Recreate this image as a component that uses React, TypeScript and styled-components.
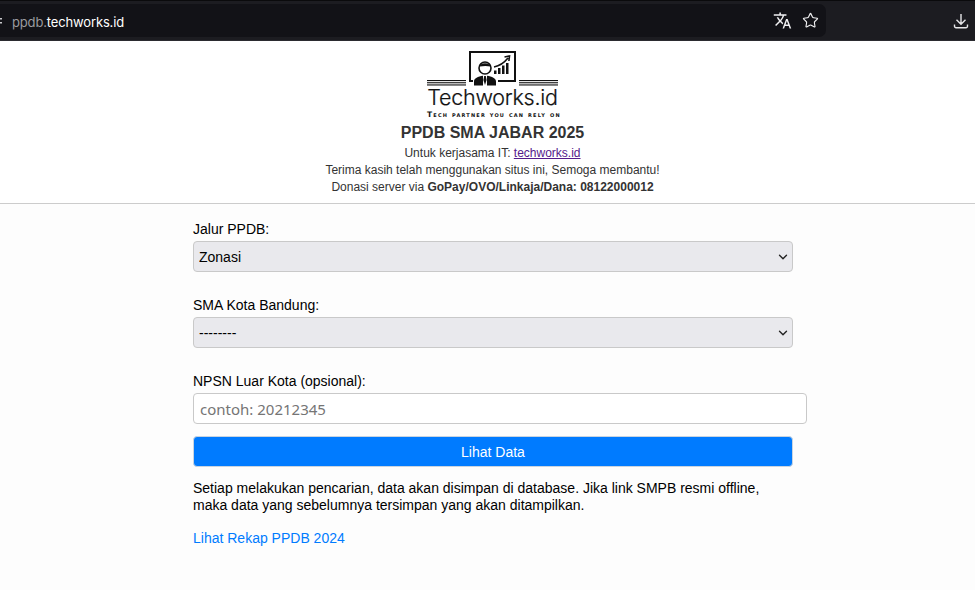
import styled, { createGlobalStyle } from "styled-components";
import { MdTranslate } from "react-icons/md";
import { ChevronDown, Star } from "lucide-react";

const GlobalStyle = createGlobalStyle`
  html, body {
    margin: 0;
    padding: 0;
    background-color: #fdfdfd;
    font-family: "Liberation Sans", Arial, sans-serif;
    color: #000;
  }
  * {
    box-sizing: border-box;
  }
`;

const BrowserBar = styled.div`
  display: flex;
  align-items: center;
  height: 41px;
  background-color: #1c1c21;
  border-top: 1px solid #0a0a0c;
  border-bottom: 1px solid #2b2b30;
`;

const Omnibox = styled.div`
  display: flex;
  align-items: center;
  width: 826px;
  height: 33px;
  padding-right: 2px;
  background-color: #121217;
  border-radius: 0 7px 7px 0;
`;

const SiteIcon = styled.svg`
  width: 12px;
  height: 12px;
  flex: none;
`;

const Url = styled.div`
  flex: 1;
  padding-top: 2px;
  font-family: "Inter", "Noto Sans", sans-serif;
  font-size: 13px;
  letter-spacing: -0.15px;
  color: #fff;
  span {
    color: #9a9a9f;
  }
`;

const BarIcon = styled.div`
  display: flex;
  align-items: center;
  justify-content: center;
  width: 28px;
  height: 28px;
  color: #f0f0f2;
`;

const BarRight = styled.div`
  flex: 1;
  display: flex;
  align-items: center;
  justify-content: flex-end;
  padding-right: 5px;
  color: #e6e6e8;
`;

const Header = styled.header`
  display: flex;
  flex-direction: column;
  align-items: center;
  height: 163px;
  padding: 7px 0 0 10px;
  background-color: #fff;
  border-bottom: 1px solid #ccc;
  color: #333;
  font-size: 12px;
  line-height: 17px;
  text-align: center;
`;

const Logo = styled.div`
  width: 131px;
  height: 75px;
  color: #111;
`;

const LogoArt = styled.svg`
  display: block;
  width: 131px;
  height: 40px;
`;

const LogoName = styled.div`
  margin-top: -4px;
  font-family: "Inter", "Noto Sans", sans-serif;
  font-size: 21.5px;
  font-weight: 300;
  line-height: 26px;
  letter-spacing: -0.25px;
  white-space: nowrap;
  -webkit-text-stroke: 0.2px #111;
`;

const LogoTag = styled.div`
  font-family: "DejaVu Sans", sans-serif;
  font-size: 7.5px;
  line-height: 9px;
  font-weight: bold;
  font-variant: small-caps;
  letter-spacing: 1.2px;
  white-space: nowrap;
`;

const Title = styled.h1`
  margin: 0 0 2px;
  font-size: 16px;
  line-height: 20px;
  font-weight: bold;
`;

const HeaderLine = styled.div`
  a {
    color: #551a8b;
  }
`;

const Main = styled.main`
  width: 600px;
  margin-left: 193px;
  padding-top: 16px;
`;

const Field = styled.div`
  margin-bottom: 24px;
`;

const Label = styled.label`
  display: block;
  margin-bottom: 3px;
  font-size: 14px;
  line-height: 18px;
`;

const SelectWrap = styled.div`
  position: relative;
`;

const Select = styled.select`
  display: block;
  width: 100%;
  height: 31px;
  padding: 0 5px;
  appearance: none;
  background-color: #e9e9ed;
  border: 1px solid #c9c9c9;
  border-radius: 4px;
  color: #000;
  font-family: inherit;
  font-size: 14px;
`;

const Caret = styled.div`
  position: absolute;
  top: 9px;
  right: 3px;
  display: flex;
  color: #222;
  pointer-events: none;
`;

const TextInput = styled.input`
  display: block;
  width: 614px;
  height: 31px;
  padding: 0 6px;
  background-color: #fff;
  border: 1px solid #c9c9c9;
  border-radius: 4px;
  font-family: "Noto Sans", sans-serif;
  font-size: 15px;
  &::placeholder {
    color: #757575;
    opacity: 1;
  }
`;

const SubmitButton = styled.button`
  display: block;
  width: 100%;
  height: 31px;
  margin-top: 12px;
  background-color: #007bff;
  border: 1px solid #c9d4e0;
  border-radius: 4px;
  color: #fff;
  font-family: inherit;
  font-size: 14px;
`;

const Note = styled.p`
  width: 580px;
  margin: 13px 0 0;
  font-size: 14px;
  line-height: 17px;
`;

const RekapLink = styled.a`
  display: block;
  margin-top: 15px;
  color: #007bff;
  font-size: 14px;
  line-height: 18px;
  text-decoration: none;
`;

const Bars = ({ x }: { x: number }) => (
  <g fill="currentColor">
    <rect x={x} y="32" width="39" height="1.1" />
    <rect x={x} y="34.200" width="39" height="1.1" />
    <rect x={x} y="36.400" width="39" height="1.1" />
  </g>
);

const App = () => {
  return (
    <>
      <GlobalStyle />
      <BrowserBar>
        <Omnibox>
          <SiteIcon viewBox="0 0 12 12">
            <rect x="0" y="3" width="2" height="1.5" fill="#c8c8cc" />
            <rect x="0" y="7" width="2" height="1.5" fill="#c8c8cc" />
          </SiteIcon>
          <Url>
            <span>ppdb.</span>techworks.id
          </Url>
          <BarIcon>
            <MdTranslate size={19} />
          </BarIcon>
          <BarIcon>
            <Star size={17} strokeWidth={1.6} />
          </BarIcon>
        </Omnibox>
        <BarRight>
          <svg width="18" height="18" viewBox="0 0 18 18" fill="none" stroke="currentColor" strokeWidth="1.4">
            <path d="M9 2v10M4.500 7.800 9 12.200l4.500-4.400M2.500 12.500v1.800a1.500 1.500 0 0 0 1.500 1.500h10a1.500 1.500 0 0 0 1.500-1.500v-1.800" />
          </svg>
        </BarRight>
      </BrowserBar>

      <Header>
        <Logo>
          <LogoArt viewBox="0 0 131 40">
            <Bars x={0} />
            <Bars x={92} />
            <path d="M43 31V4h45v29H71M43 31v2h3" fill="none" stroke="currentColor" strokeWidth="2" />
            <circle cx="58" cy="20" r="6" fill="#fff" stroke="currentColor" strokeWidth="1.600" />
            <path d="M52.500 18.500c1-4.300 10-4.300 11 0-3-.8-7-.8-11 0z" fill="currentColor" />
            <path d="M47 37.500v-4c0-3.500 4-5 9-5.800v9.800zM69 37.500v-4c0-3.500-4-5-9-5.800v9.800z" fill="currentColor" />
            <path d="M57.200 28h1.600l.8 4-1.600 5-1.600-5z" fill="currentColor" />
            <g fill="currentColor">
              <rect x="67" y="22.500" width="2.500" height="3.500" />
              <rect x="71" y="20" width="2.500" height="6" />
              <rect x="75" y="17.500" width="2.500" height="8.500" />
              <rect x="79" y="15" width="2.500" height="11" />
            </g>
            <path d="M67 19c5-1 10-4 14-9M77.500 9l5-1-.6 5" fill="none" stroke="currentColor" strokeWidth="1.600" />
          </LogoArt>
          <LogoName>Techworks.id</LogoName>
          <LogoTag>Tech partner you can rely on</LogoTag>
        </Logo>
        <Title>PPDB SMA JABAR 2025</Title>
        <HeaderLine>
          Untuk kerjasama IT: <a href="#techworks">techworks.id</a>
        </HeaderLine>
        <HeaderLine>Terima kasih telah menggunakan situs ini, Semoga membantu!</HeaderLine>
        <HeaderLine>
          Donasi server via <b>GoPay/OVO/Linkaja/Dana: 08122000012</b>
        </HeaderLine>
      </Header>

      <Main>
        <Field>
          <Label htmlFor="jalur">Jalur PPDB:</Label>
          <SelectWrap>
            <Select id="jalur" defaultValue="zonasi">
              <option value="zonasi">Zonasi</option>
            </Select>
            <Caret>
              <ChevronDown size={14} strokeWidth={2.4} />
            </Caret>
          </SelectWrap>
        </Field>
        <Field>
          <Label htmlFor="sma">SMA Kota Bandung:</Label>
          <SelectWrap>
            <Select id="sma" defaultValue="none">
              <option value="none">--------</option>
            </Select>
            <Caret>
              <ChevronDown size={14} strokeWidth={2.4} />
            </Caret>
          </SelectWrap>
        </Field>
        <div>
          <Label htmlFor="npsn">NPSN Luar Kota (opsional):</Label>
          <TextInput id="npsn" placeholder="contoh: 20212345" />
        </div>
        <SubmitButton>Lihat Data</SubmitButton>
        <Note>
          Setiap melakukan pencarian, data akan disimpan di database. Jika link SMPB resmi offline,
          maka data yang sebelumnya tersimpan yang akan ditampilkan.
        </Note>
        <RekapLink href="#rekap">Lihat Rekap PPDB 2024</RekapLink>
      </Main>
    </>
  );
};

export default App;
